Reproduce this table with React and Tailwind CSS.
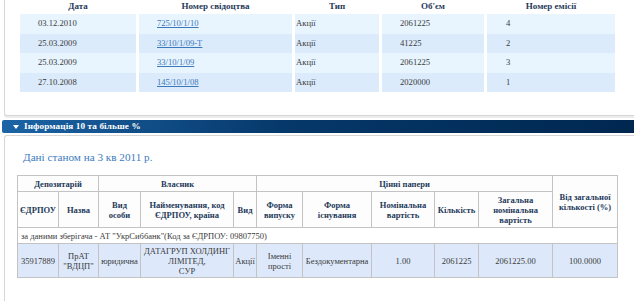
import React from "react";

const issues = [
  { date: "03.12.2010", cert: "725/10/1/10", type: "Акції", volume: "2061225", num: "4" },
  { date: "25.03.2009", cert: "33/10/1/09-Т", type: "Акції", volume: "41225", num: "2" },
  { date: "25.03.2009", cert: "33/10/1/09", type: "Акції", volume: "2061225", num: "3" },
  { date: "27.10.2008", cert: "145/10/1/08", type: "Акції", volume: "2020000", num: "1" },
];

const cols = "grid grid-cols-[116px_153px_84px_102px_128px] gap-x-[3px]";
const th = "border border-[#c3c3c3] bg-[#fdfdfd] font-bold text-[#1f3a5a] text-center align-middle px-[1px]";
const td = "border border-[#c3c3c3] bg-[#dde9fb] text-[#3a3a3a] text-center align-middle px-[1px]";

function IssuesTable() {
  return (
    <div className="pl-[15px] text-[8.6px]">
      <div className={`${cols} h-[12px] items-center font-bold text-[#1f3a5a] text-[9px]`}>
        <div className="text-center">Дата</div>
        <div className="text-center">Номер свідоцтва</div>
        <div className="text-center">Тип</div>
        <div className="text-center">Об'єм</div>
        <div className="text-center">Номер емісії</div>
      </div>
      <div className="mt-[2px]">
        {issues.map((r, i) => {
          const bg = i % 2 === 0 ? "bg-[#e8f4fe]" : "bg-[#dcebfc]";
          return (
            <div key={i} className={`${cols} h-[19.5px] text-[#3a3a3a]`}>
              <div className={`${bg} flex items-center pl-[18px]`}>{r.date}</div>
              <div className={`${bg} flex items-center pl-[18px]`}>
                <a href="#" className="text-[#3b78b9] underline">{r.cert}</a>
              </div>
              <div className={`${bg} flex items-center pl-[1px]`}>{r.type}</div>
              <div className={`${bg} flex items-center pl-[18px]`}>{r.volume}</div>
              <div className={`${bg} flex items-center pl-[19px]`}>{r.num}</div>
            </div>
          );
        })}
      </div>
    </div>
  );
}

function OwnersTable() {
  return (
    <table className="mt-[11px] w-[600px] table-fixed border-collapse text-[8.5px] leading-[10px]">
      <colgroup>
        <col className="w-[41px]" />
        <col className="w-[40px]" />
        <col className="w-[42px]" />
        <col className="w-[93px]" />
        <col className="w-[23px]" />
        <col className="w-[46px]" />
        <col className="w-[69px]" />
        <col className="w-[63px]" />
        <col className="w-[44px]" />
        <col className="w-[74px]" />
        <col className="w-[65px]" />
      </colgroup>
      <thead>
        <tr className="h-[16px]">
          <th colSpan={2} className={th}>Депозитарій</th>
          <th colSpan={3} className={th}>Власник</th>
          <th colSpan={5} className={th}>Цінні папери</th>
          <th rowSpan={2} className={th}>
            Від загальної
            <br />
            кількості (%)
          </th>
        </tr>
        <tr className="h-[36px]">
          <th className={th}>ЄДРПОУ</th>
          <th className={th}>Назва</th>
          <th className={th}>
            Вид
            <br />
            особи
          </th>
          <th className={th}>
            Найменування, код
            <br />
            ЄДРПОУ, країна
          </th>
          <th className={th}>Вид</th>
          <th className={th}>
            Форма
            <br />
            випуску
          </th>
          <th className={th}>
            Форма
            <br />
            існування
          </th>
          <th className={th}>
            Номінальна
            <br />
            вартість
          </th>
          <th className={th}>Кількість</th>
          <th className={th}>
            Загальна
            <br />
            номінальна
            <br />
            вартість
          </th>
        </tr>
      </thead>
      <tbody>
        <tr className="h-[16px]">
          <td colSpan={11} className="border border-[#c3c3c3] bg-white text-[#3a3a3a] text-left pl-[3px]">
            за даними зберігача - АТ "УкрСиббанк"(Код за ЄДРПОУ: 09807750)
          </td>
        </tr>
        <tr className="h-[34px]">
          <td className={td}>35917889</td>
          <td className={td}>
            ПрАТ
            <br />
            "ВДЦП"
          </td>
          <td className={td}>юридична</td>
          <td className={td}>
            ДАТАГРУП ХОЛДИНГ
            <br />
            ЛІМІТЕД,
            <br />
            СУР
          </td>
          <td className={td}>Акції</td>
          <td className={td}>
            Іменні
            <br />
            прості
          </td>
          <td className={td}>Бездокументарна</td>
          <td className={td}>1.00</td>
          <td className={td}>2061225</td>
          <td className={td}>2061225.00</td>
          <td className={td}>100.0000</td>
        </tr>
      </tbody>
    </table>
  );
}

export default function App() {
  return (
    <div className="w-[634px] h-[301px] overflow-hidden bg-white font-['Liberation_Serif',serif]">
      <div className="ml-[4px] h-[116px] border-l border-b border-[#d6d6d6] rounded-bl-[3px] shadow-[0_2px_0_#ececec]">
        <IssuesTable />
      </div>

      <div className="mt-[4px] ml-[2px] h-[13px] flex items-center rounded-l-[2px] bg-linear-to-r from-[#1c64a6] via-[#06386a] via-45% to-[#002750] pl-[11px]">
        <svg width="6" height="4" viewBox="0 0 6 4" className="mt-[1px]">
          <path d="M0 0h6L3 4z" fill="#fff" />
        </svg>
        <span className="ml-[5px] text-white font-bold text-[9.2px] tracking-[0.1px]">
          Інформація 10 та більше %
        </span>
      </div>

      <div className="mt-[2px] ml-[4px] h-[200px] border-l border-t border-[#d6d6d6] rounded-tl-[3px] pl-[12px] pt-[14px]">
        <div className="pl-[6px] text-[11.2px] leading-[14px] text-[#3d7cc0]">Дані станом на 3 кв 2011 р.</div>
        <OwnersTable />
      </div>
    </div>
  );
}
